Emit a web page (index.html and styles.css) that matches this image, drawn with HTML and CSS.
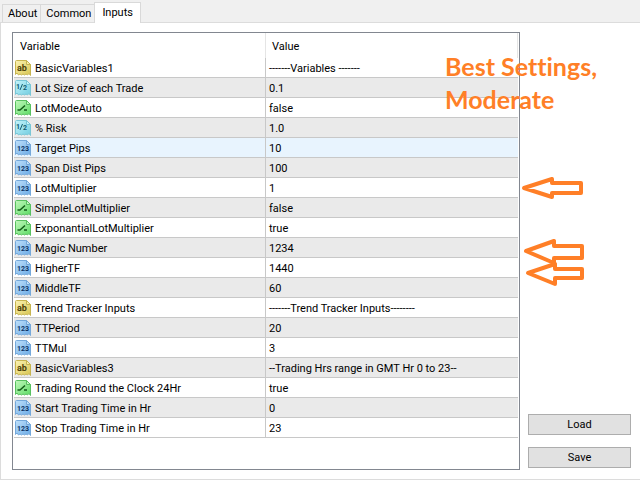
FILE: index.html
```
<!DOCTYPE html>
<html lang="en">
<head>
	<meta charset="utf-8">
	<title>Inputs</title>
	<link rel="stylesheet" href="styles.css">
</head>
<body>
	<!-- row icons -->
	<svg class="sprite" aria-hidden="true">
		<defs>
			<linearGradient id="yellow" x1="0" y1="0" x2="1" y2="1"><stop offset="0" stop-color="#fbf3b4"/><stop offset="1" stop-color="#d8c450"/></linearGradient>
			<linearGradient id="cyan" x1="0" y1="0" x2="1" y2="1"><stop offset="0" stop-color="#c4f4fb"/><stop offset="1" stop-color="#72cde0"/></linearGradient>
			<linearGradient id="green" x1="0" y1="0" x2="1" y2="1"><stop offset="0" stop-color="#c2f7bd"/><stop offset="1" stop-color="#5cdc64"/></linearGradient>
			<linearGradient id="blue" x1="0" y1="0" x2="1" y2="1"><stop offset="0" stop-color="#bfe0fb"/><stop offset="1" stop-color="#6babe6"/></linearGradient>
			<path id="sheet" d="M.5 1.500q0-1 1-1h10l4 4v11l-1.500-2-1.500 1.500-1.500-1-1.500 1-1.500-1-1.500 1-1.500-1-1.500 1-1.500-2-1.500 1.500z"/>
			<path id="fold" d="M11.500.5v4h4z"/>
			<symbol id="text" viewBox="0 0 16 16">
				<use href="#sheet" fill="url(#yellow)" stroke="#c6b450"/><use href="#fold" fill="#f8efaa" stroke="#c6b450"/>
				<text x="2" y="11" font-size="9" fill="#4c4108">ab</text>
			</symbol>
			<symbol id="double" viewBox="0 0 16 16">
				<use href="#sheet" fill="url(#cyan)" stroke="#78c6d6"/><use href="#fold" fill="#c9f5fb" stroke="#78c6d6"/>
				<text x="1" y="9" font-size="7" fill="#125d70">1</text>
				<path d="M5 10l2.500-6" stroke="#125d70" fill="none"/>
				<text x="8" y="10" font-size="7" fill="#125d70">2</text>
			</symbol>
			<symbol id="bool" viewBox="0 0 16 16">
				<use href="#sheet" fill="url(#green)" stroke="#58c060"/><use href="#fold" fill="#c4f7c0" stroke="#58c060"/>
				<path d="M2.500 10H5l5-4.500M9 10h3" stroke="#125c18" stroke-width="1.500" fill="none"/>
			</symbol>
			<symbol id="int" viewBox="0 0 16 16">
				<use href="#sheet" fill="url(#blue)" stroke="#74a8da"/><use href="#fold" fill="#c3e1fa" stroke="#74a8da"/>
				<text x="2" y="11" font-size="7" fill="#0d3566">123</text>
			</symbol>
		</defs>
	</svg>

	<nav class="tabs">
		<button type="button">About</button>
		<button type="button">Common</button>
		<button type="button" class="active">Inputs</button>
	</nav>

	<main class="panel">
		<div class="list">
			<table>
				<thead>
					<tr><th>Variable</th><th>Value</th></tr>
				</thead>
				<tbody>
					<tr><td><svg><use href="#text"/></svg>BasicVariables1</td><td>-------Variables -------</td></tr>
					<tr><td><svg><use href="#double"/></svg>Lot Size of each Trade</td><td>0.1</td></tr>
					<tr><td><svg><use href="#bool"/></svg>LotModeAuto</td><td>false</td></tr>
					<tr><td><svg><use href="#double"/></svg>% Risk</td><td>1.0</td></tr>
					<tr class="hot"><td><svg><use href="#int"/></svg>Target Pips</td><td>10</td></tr>
					<tr><td><svg><use href="#int"/></svg>Span Dist Pips</td><td>100</td></tr>
					<tr><td><svg><use href="#int"/></svg>LotMultiplier</td><td>1</td></tr>
					<tr><td><svg><use href="#bool"/></svg>SimpleLotMultiplier</td><td>false</td></tr>
					<tr><td><svg><use href="#bool"/></svg>ExponantialLotMultiplier</td><td>true</td></tr>
					<tr><td><svg><use href="#int"/></svg>Magic Number</td><td>1234</td></tr>
					<tr><td><svg><use href="#int"/></svg>HigherTF</td><td>1440</td></tr>
					<tr><td><svg><use href="#int"/></svg>MiddleTF</td><td>60</td></tr>
					<tr><td><svg><use href="#text"/></svg>Trend Tracker Inputs</td><td>-------Trend Tracker Inputs--------</td></tr>
					<tr><td><svg><use href="#int"/></svg>TTPeriod</td><td>20</td></tr>
					<tr><td><svg><use href="#int"/></svg>TTMul</td><td>3</td></tr>
					<tr><td><svg><use href="#text"/></svg>BasicVariables3</td><td>--Trading Hrs range in GMT Hr 0 to 23--</td></tr>
					<tr><td><svg><use href="#bool"/></svg>Trading Round the Clock 24Hr</td><td>true</td></tr>
					<tr><td><svg><use href="#int"/></svg>Start Trading Time in Hr</td><td>0</td></tr>
					<tr><td><svg><use href="#int"/></svg>Stop Trading Time in Hr</td><td>23</td></tr>
				</tbody>
			</table>
		</div>
		<div class="actions">
			<button type="button">Load</button>
			<button type="button">Save</button>
		</div>

		<!-- notes drawn over the list -->
		<p class="note">Best Settings,<br>Moderate</p>
		<svg class="arrows" viewBox="0 0 64 112" aria-hidden="true">
			<path d="M3 12L31 3v4h29v10H31v4z"/>
			<path d="M5 75L33 65v5h28v12H33v5z"/>
			<path d="M7 97L34 88v5h27v9H34v6z"/>
		</svg>
	</main>
</body>
</html>
```
FILE: styles.css
```
* {
	box-sizing: border-box;
}
body {
	margin: 0;
	min-height: 100vh;
	display: flex;
	flex-direction: column;
	background: #f0f0f0;
	color: #000;
	font-family: Roboto, "Liberation Sans", sans-serif;
	font-size: 11px;
}
button {
	font: inherit;
	color: inherit;
}
.sprite {
	position: absolute;
	width: 0;
	height: 0;
}
.sprite text {
	font-family: Roboto, sans-serif;
	font-weight: bold;
}

.tabs {
	display: flex;
	align-items: flex-end;
	height: 23px;
	padding-left: 2px;
}
.tabs button {
	height: 19px;
	padding: 0 3px 0 5px;
	border: 1px solid #d9d9d9;
	border-right: 0;
	background: #f0f0f0;
}
.tabs .active {
	position: relative;
	height: 21px;
	padding: 0 7px 2px;
	border-right: 1px solid #d9d9d9;
	border-bottom: 0;
	background: #fff;
	z-index: 1;
}

.panel {
	position: relative;
	flex: 1;
	display: flex;
	gap: 8px;
	margin-top: -1px;
	padding: 9px 9px 9px 11px;
	border: 1px solid #dcdcdc;
	border-right: 0;
	background: #fff;
}
.list {
	flex: 1;
	padding: 0 1px;
	border: 1px solid #828790;
}
table {
	width: 100%;
	table-layout: fixed;
	border-collapse: separate;
	border-spacing: 0;
}
th {
	height: 25px;
	padding: 2px 0 0 6px;
	border-right: 1px solid #e5e5e5;
	font-weight: normal;
	text-align: left;
}
td {
	height: 20px;
	padding: 2px 0 0 3px;
	border-bottom: 1px solid #c8c8c8;
	line-height: 17px;
	white-space: nowrap;
}
th:first-child {
	width: 50%;
}
td:first-child {
	padding-left: 1px;
	border-right: 1px solid #c8c8c8;
}
tbody tr:nth-child(even) {
	background: #eaeaea;
}
tbody .hot {
	background: #e8f4fe;
}
td svg {
	width: 16px;
	height: 16px;
	margin-right: 4px;
	vertical-align: top;
}

.actions {
	display: flex;
	flex-direction: column;
	justify-content: flex-end;
	gap: 12px;
	width: 103px;
	padding-bottom: 2px;
}
.actions button {
	height: 21px;
	padding: 0;
	border: 1px solid #adadad;
	background: #e1e1e1;
}

.note {
	position: absolute;
	top: 27px;
	right: 43px;
	margin: 0;
	color: #ff7f27;
	font-family: Lato, sans-serif;
	font-size: 25px;
	font-weight: bold;
	font-variant-ligatures: none;
	line-height: 33px;
}
.arrows {
	position: absolute;
	top: 153px;
	right: 55px;
	width: 64px;
	height: 112px;
	fill: none;
	stroke: #ff7f27;
	stroke-width: 4;
	stroke-linejoin: round;
}
```
